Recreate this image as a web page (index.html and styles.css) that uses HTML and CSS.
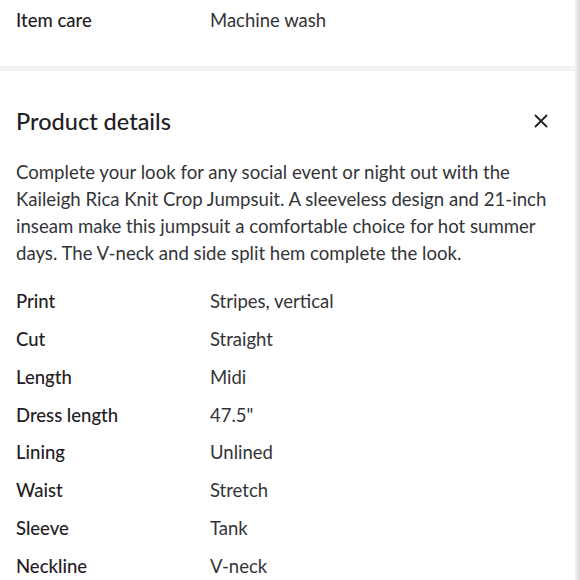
FILE: index.html
```html
<!DOCTYPE html>
<html>
<head>
<meta charset="utf-8">
<link rel="stylesheet" href="styles.css">
</head>
<body>
<div class="page">
  <main class="content">
    <div class="row top-row">
      <span class="label">Item care</span>
      <span class="value">Machine wash</span>
    </div>
    <div class="divider"></div>
    <section class="details">
      <header class="details-head">
        <h2 class="title">Product details</h2>
        <button class="close" aria-label="Close">
          <svg width="14" height="14" viewBox="0 0 14 14"><path d="M1.5 1.5 L12.5 12.5 M12.5 1.5 L1.5 12.5" stroke="#1f2024" stroke-width="1.8" stroke-linecap="round" fill="none"/></svg>
        </button>
      </header>
      <p class="desc">Complete your look for any social event or night out with the Kaileigh Rica Knit Crop Jumpsuit. A sleeveless design and 21-inch inseam make this jumpsuit a comfortable choice for hot summer days. The V-neck and side split hem complete the look.</p>
      <div class="specs">
        <div class="row"><span class="label">Print</span><span class="value">Stripes, vertical</span></div>
        <div class="row"><span class="label">Cut</span><span class="value">Straight</span></div>
        <div class="row"><span class="label">Length</span><span class="value">Midi</span></div>
        <div class="row"><span class="label">Dress length</span><span class="value">47.5"</span></div>
        <div class="row"><span class="label">Lining</span><span class="value">Unlined</span></div>
        <div class="row"><span class="label">Waist</span><span class="value">Stretch</span></div>
        <div class="row"><span class="label">Sleeve</span><span class="value">Tank</span></div>
        <div class="row"><span class="label">Neckline</span><span class="value">V-neck</span></div>
      </div>
    </section>
  </main>
  <div class="edge"></div>
</div>
</body>
</html>
```
FILE: styles.css
```css
html, body {
  margin: 0;
  padding: 0;
  background: #ffffff;
}
body {
  font-family: Lato, "Open Sans", sans-serif;
  color: #2e2f32;
  width: 580px;
  height: 580px;
  overflow: hidden;
}
.page {
  display: flex;
  height: 580px;
}
.content {
  flex: 1;
  min-width: 0;
}
.edge {
  width: 5px;
  background: linear-gradient(to right, #f4f4f4, #d9d9d9);
}
.row {
  display: flex;
  align-items: center;
  height: 37.86px;
  padding-left: 16px;
  font-size: 18.5px;
}
.top-row {
  height: 24px;
  padding-top: 8px;
  padding-bottom: 34px;
}
.label {
  width: 194px;
  flex: none;
  font-weight: 500;
  color: #1f2024;
}
.value {
  font-weight: 400;
  color: #333438;
}
.divider {
  height: 5px;
  background: #f2f2f4;
}
.details-head {
  display: flex;
  align-items: center;
  justify-content: space-between;
  height: 30px;
  margin-top: 35px;
  padding: 0 27px 0 16px;
}
.title {
  margin: 0;
  font-size: 23.5px;
  font-weight: 500;
  color: #1f2024;
}
.close {
  border: 0;
  background: none;
  padding: 0;
  width: 14px;
  height: 14px;
  display: flex;
}
.desc {
  margin: 22.5px 0 0;
  padding: 0 16px;
  font-size: 18.6px;
  line-height: 27px;
  color: #333438;
}
.specs {
  margin-top: 15.5px;
}
```
